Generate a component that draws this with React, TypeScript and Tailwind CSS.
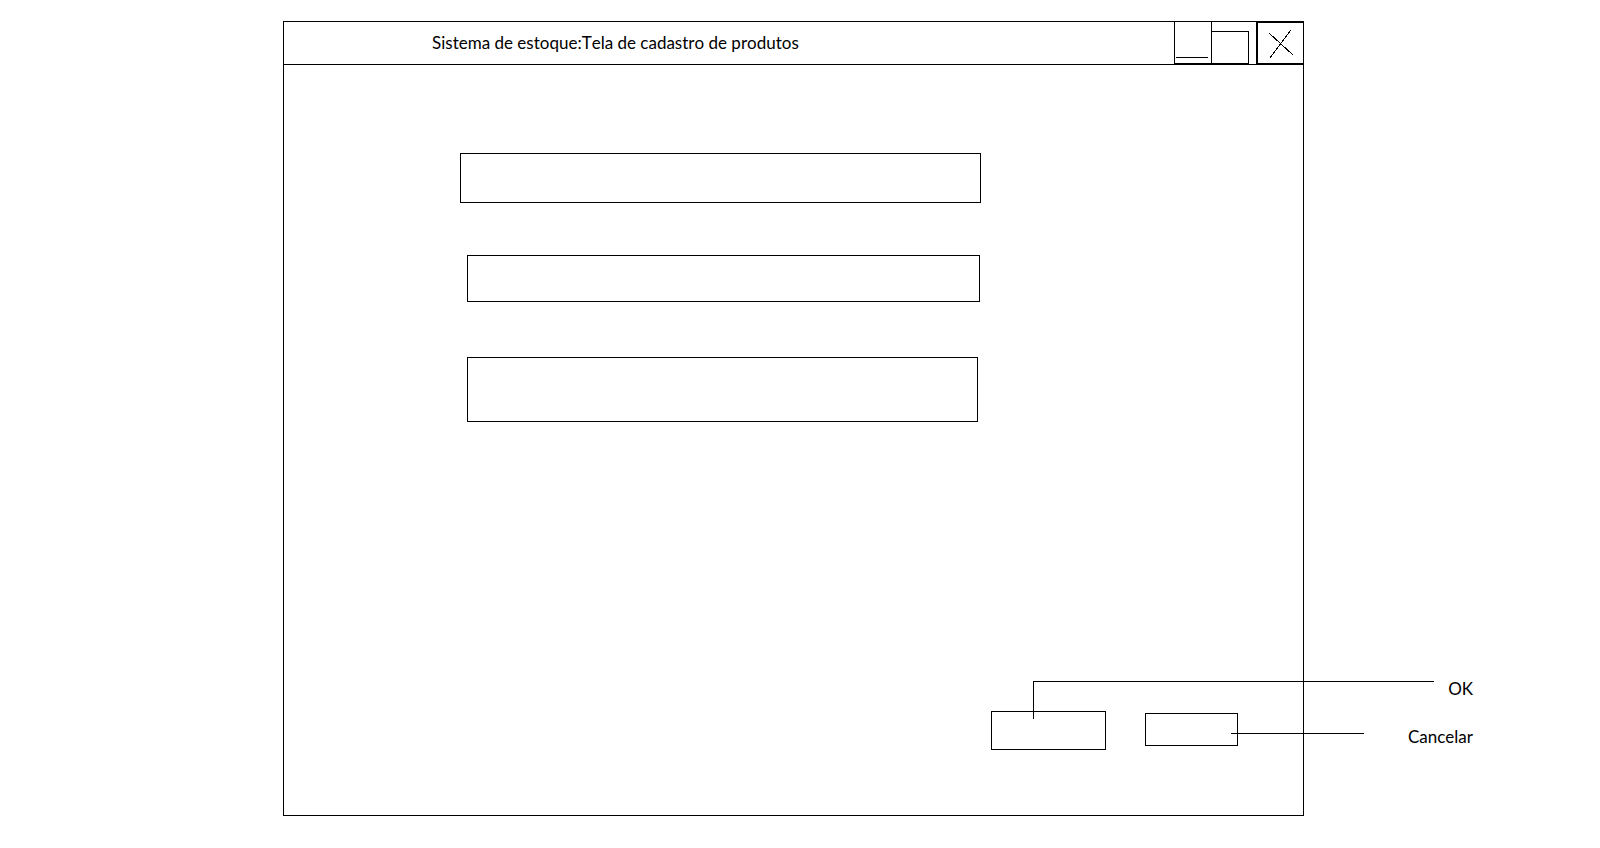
function WindowControls() {
  return (
    <div className="flex shrink-0 items-stretch">
      <button
        type="button"
        aria-label="Minimizar"
        className="flex w-[37px] items-end border-b border-l border-black pb-[5px] pl-px"
      >
        <span className="h-px w-8 bg-black" />
      </button>
      <button
        type="button"
        aria-label="Maximizar"
        className="flex w-[38px] items-end border-l border-black"
      >
        <span className="h-[33px] w-full border-y border-r border-black" />
      </button>
      <button
        type="button"
        aria-label="Fechar"
        className="ml-[7px] w-[47px] border-y border-l-2 border-black"
      >
        <svg
          viewBox="0 0 45 40"
          className="h-10 w-[45px]"
          stroke="black"
          shapeRendering="crispEdges"
          aria-hidden="true"
        >
          <path d="M11 10 L35 32 M33 7 L12 35" />
        </svg>
      </button>
    </div>
  );
}

export default function App() {
  return (
    <main className="grid min-h-screen grid-cols-[283fr_1021fr_296fr] items-start bg-white pt-[21px] font-['Lato',sans-serif] text-[17px] leading-6 text-black [font-kerning:none]">
      <section className="col-start-2 border border-black">
        <header className="flex h-[43px] border-b border-black">
          <h1 className="flex-1 self-center whitespace-nowrap pl-[148px]">
            Sistema de estoque:Tela de cadastro de produtos
          </h1>
          <WindowControls />
        </header>

        <form className="pt-[88px] pb-[65px]" onSubmit={(e) => e.preventDefault()}>
          <div className="grid grid-cols-[176fr_521fr_322fr]">
            <input
              aria-label="Primeiro campo do produto"
              className="col-start-2 h-[50px] w-full border border-black px-3"
            />
          </div>
          <div className="mt-[52px] grid grid-cols-[183fr_513fr_323fr]">
            <input
              aria-label="Segundo campo do produto"
              className="col-start-2 h-[47px] w-full border border-black px-3"
            />
          </div>
          <div className="mt-[55px] grid grid-cols-[183fr_511fr_325fr]">
            <input
              aria-label="Terceiro campo do produto"
              className="col-start-2 h-[65px] w-full border border-black px-3"
            />
          </div>

          <div className="mt-[289px] grid grid-cols-[707fr_115fr_39fr_93fr_65fr]">
            <div className="relative col-start-2">
              <button
                id="ok"
                type="submit"
                aria-labelledby="ok-label"
                className="block h-[39px] w-full border border-black"
              />
              <span className="pointer-events-none absolute -top-[30px] left-[42px] h-[38px] w-[401px] border-t border-l border-black" />
            </div>
            <div className="relative col-start-4 pt-0.5">
              <button
                id="cancelar"
                type="button"
                aria-labelledby="cancelar-label"
                className="block h-[33px] w-full border border-black"
              />
              <span className="pointer-events-none absolute top-[22px] left-[86px] h-px w-[133px] bg-black" />
            </div>
          </div>
        </form>
      </section>

      <aside className="flex flex-col items-end gap-6 self-start pt-[656px] pr-[127px]">
        <label id="ok-label" htmlFor="ok">
          OK
        </label>
        <label id="cancelar-label" htmlFor="cancelar">
          Cancelar
        </label>
      </aside>
    </main>
  );
}
